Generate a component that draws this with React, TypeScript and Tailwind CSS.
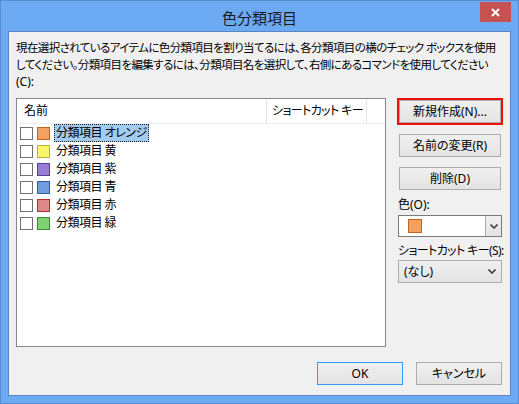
import React from 'react'

const categories = [
  { name: '分類項目 オレンジ', fill: 'bg-[#f4a060]', border: 'border-[#c4641e]', selected: true },
  { name: '分類項目 黄', fill: 'bg-[#fbf56a]', border: 'border-[#bdb22b]', selected: false },
  { name: '分類項目 紫', fill: 'bg-[#9a7ed6]', border: 'border-[#5b3e9e]', selected: false },
  { name: '分類項目 青', fill: 'bg-[#729be0]', border: 'border-[#2f5aa6]', selected: false },
  { name: '分類項目 赤', fill: 'bg-[#de8889]', border: 'border-[#b42e31]', selected: false },
  { name: '分類項目 緑', fill: 'bg-[#80d074]', border: 'border-[#3a8a30]', selected: false },
]

const Chevron = () => (
  <svg width="8" height="5" viewBox="0 0 8 5" className="block">
    <path d="M0.5 0.5 L4 4 L7.5 0.5" fill="none" stroke="#404040" strokeWidth="1.6" />
  </svg>
)

const Button = ({ label, className = '' }: { label: string; className?: string }) => (
  <div
    className={`h-[23px] flex items-center justify-center border bg-gradient-to-b from-[#f0f0f0] to-[#e3e3e3] text-[12px] text-black ${className}`}
  >
    {label}
  </div>
)

export default function App() {
  return (
    <div className="w-[519px] h-[404px] bg-[#6caaf4] border border-[#5a8bd2] px-[7px] pb-[7px] flex flex-col font-['Noto_Sans','Noto_Sans_CJK_JP',sans-serif] [font-feature-settings:'palt']">
      {/* title bar */}
      <div className="h-[30px] grid grid-cols-[31px_1fr_31px] items-start">
        <div />
        <div className="pt-[10px] text-center text-[15px] leading-[15px] text-[#1a1a1a]">色分類項目</div>
        <div className="h-[20px] mt-[1px] bg-[#c75050] flex items-center justify-center">
          <svg width="9" height="9" viewBox="0 0 9 9">
            <path d="M1 1 L8 8 M8 1 L1 8" stroke="#ffffff" strokeWidth="2" />
          </svg>
        </div>
      </div>

      {/* client area */}
      <div className="flex-1 bg-[#f0f0f0] border border-[#5b86c4] pl-[7px] pr-[8px] pt-[7px] flex flex-col text-[12px] text-black">
        <p className="leading-[17px] whitespace-nowrap text-[11.5px] tracking-[-0.6px]">
          現在選択されているアイテムに色分類項目を割り当てるには、各分類項目の横のチェック ボックスを使用
          <br />
          してください。分類項目を編集するには、分類項目名を選択して、右側にあるコマンドを使用してください
          <br />
          <span className="text-[12px] tracking-normal">(C):</span>
        </p>

        <div className="mt-[8px] flex">
          {/* list */}
          <div className="w-[370px] h-[249px] bg-white border border-[#828790] flex flex-col">
            <div className="h-[25px] flex border-b border-[#e8eef6]">
              <div className="w-[250px] pl-[7px] flex items-center border-r border-[#e5e5e5]">名前</div>
              <div className="w-[100px] pl-[5px] flex items-center whitespace-nowrap tracking-[-0.6px] border-r border-[#e5e5e5]">
                ショートカット キー
              </div>
              <div className="flex-1" />
            </div>
            {categories.map((c) => (
              <div key={c.name} className="h-[18px] flex items-center pl-[3px]">
                <div className="w-[13px] h-[13px] border border-[#707070] bg-white" />
                <div className={`w-[13px] h-[13px] ml-[4px] border ${c.fill} ${c.border}`} />
                <div
                  className={`ml-[4px] h-[18px] px-[1px] flex items-center whitespace-nowrap tracking-[-0.5px] border ${
                    c.selected ? 'bg-[#a3cbf0] border-dotted border-[#222]' : 'border-transparent'
                  }`}
                >
                  {c.name}
                </div>
              </div>
            ))}
          </div>

          {/* right column */}
          <div className="ml-[12px] w-[104px] flex flex-col">
            <div className="mt-[2px] mx-[1px] ring-[2px] ring-[#ec1111]">
              <Button label="新規作成(N)..." className="border-[#acacac]" />
            </div>
            <Button label="名前の変更(R)" className="mt-[11px] mx-[1px] border-[#acacac]" />
            <Button label="削除(D)" className="mt-[10px] mx-[1px] border-[#acacac]" />
            <div className="mt-[6px] leading-[17px]">色(O):</div>
            <div className="mt-[2px] h-[22px] flex bg-white border border-[#7a7a7a]">
              <div className="flex-1 flex items-center pl-[9px]">
                <div className="w-[14px] h-[14px] bg-[#f4a060] border border-[#c4641e]" />
              </div>
              <div className="w-[16px] flex items-center justify-center border-l border-[#acacac] bg-gradient-to-b from-[#f0f0f0] to-[#e3e3e3]">
                <Chevron />
              </div>
            </div>
            <div className="mt-[5px] leading-[17px] whitespace-nowrap tracking-[-0.6px]">ショートカット キー(S):</div>
            <div className="mt-[1px] h-[23px] flex items-center justify-between pl-[5px] pr-[5px] border border-[#acacac] bg-gradient-to-b from-[#f0f0f0] to-[#e3e3e3]">
              <span>(なし)</span>
              <Chevron />
            </div>
          </div>
        </div>

        <div className="mt-[15px] flex justify-end gap-[13px]">
          <Button label="OK" className="w-[86px] border-[#3399ff]" />
          <Button label="キャンセル" className="w-[86px] border-[#acacac]" />
        </div>
      </div>
    </div>
  )
}
